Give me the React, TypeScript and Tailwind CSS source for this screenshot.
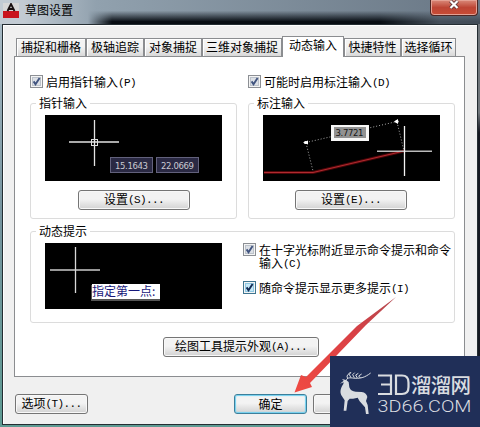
import type { ReactNode } from "react";
import clsx from "clsx";

const TABS = [
    { label: "捕捉和栅格", width: "w-[70px]" },
    { label: "极轴追踪", width: "w-[58px]" },
    { label: "对象捕捉", width: "w-[58px]" },
    { label: "三维对象捕捉", width: "w-[80px]" },
    { label: "动态输入", width: "w-[62px]", active: true },
    { label: "快捷特性", width: "w-[57px]" },
    { label: "选择循环", width: "w-[55px]" },
];

// Latin letters take half the width of a Chinese character
function Key({ children }: { children: ReactNode }) {
    return <span className="relative -top-px font-['Liberation_Mono',monospace] text-[11px] tracking-[-0.6px]">{children}</span>;
}

function Button({ className, primary, children }: { className: string; primary?: boolean; children?: ReactNode }) {
    return (
        <button
            className={clsx(
                "flex h-5 shrink-0 items-center justify-center rounded-[3px] border bg-linear-to-b from-[#f3f3f3] from-45% to-[#d2d2d2] whitespace-pre",
                primary ? "border-[#3c7f9b] shadow-[inset_0_0_1px_1px_#6fd0f0]" : "border-[#757575] shadow-[inset_0_0_0_1px_#f8f8f8]",
                className
            )}
        >
            <span className="leading-3">{children}</span>
        </button>
    );
}

function Checkbox({ hot, children }: { hot?: boolean; children: ReactNode }) {
    return (
        <label className="flex items-start gap-[3px] leading-[13px]">
            <svg className="shrink-0" width="13" height="13" viewBox="0 0 13 13">
                <rect x=".5" y=".5" width="12" height="12" fill="#f4f4f4" stroke={hot ? "#3f7590" : "#8c8f94"} />
                <rect x="2.5" y="2.5" width="8" height="8" fill={hot ? "#c5e8f8" : "#dce0e6"} stroke={hot ? "#8fc8e2" : "#bcc2ca"} />
                <path d="M3.6 6.4 5.5 9.2 9.6 3" fill="none" stroke={hot ? "#122c55" : "#41547f"} strokeWidth="1.9" />
            </svg>
            <span>{children}</span>
        </label>
    );
}

function Group({ title, className, children }: { title: string; className: string; children: ReactNode }) {
    return (
        <fieldset className={clsx("min-w-0 rounded-[3px] border border-[#dcdcdc] px-[14px]", className)}>
            <legend className="-ml-[9px] h-3 px-[3px] leading-3">{title}</legend>
            {children}
        </fieldset>
    );
}

function PointerPreview() {
    return (
        <svg className="mt-[6px] block" width="177" height="66" viewBox="0 0 177 66">
            <rect width="177" height="66" fill="#000" />
            <path d="M24 27h50" stroke="#aaa" strokeWidth="1.8" />
            <path d="M49.500 5v46" stroke="#e4e4e4" strokeWidth="1.3" />
            <rect x="46.500" y="24.500" width="6" height="6" fill="none" stroke="#ddd" />
            <g fill="#2a2943" stroke="#62617c">
                <rect x="65.500" y="42.500" width="42" height="15" />
                <rect x="111.500" y="42.500" width="42" height="15" />
            </g>
            <g fill="#c9c9d2" fontFamily="DejaVu Sans, sans-serif" fontSize="8.500">
                <text x="70" y="53.500" textLength="33">15.1643</text>
                <text x="116" y="53.500" textLength="33">22.0669</text>
            </g>
        </svg>
    );
}

function DimensionPreview() {
    return (
        <svg className="mt-[6px] block" width="177" height="66" viewBox="0 0 177 66">
            <rect width="177" height="66" fill="#000" />
            <path d="M1 57.500h49L141 36" fill="none" stroke="#4d0608" strokeWidth="3" />
            <path d="M1 57.500h49L141 36" fill="none" stroke="#b02a30" strokeWidth="1.1" />
            <path d="M43 27.500 134 6.500M43 28l7 28M134 7l7 29" stroke="#aaa" strokeDasharray="1 2" />
            <path d="m40 27.500 5-2v4zM131 6.500l4-2.500v5z" fill="#fff" />
            <circle cx="42.500" cy="27.500" r="1.600" fill="#fff" />
            <circle cx="134" cy="6.500" r="1.600" fill="#fff" />
            <path d="M114 36.300h55" stroke="#bbb" strokeWidth="1.500" />
            <path d="M141.500 11v50" stroke="#f4f4f4" strokeWidth="1.300" />
            <rect x="68" y="10" width="38" height="16" fill="#f7f7f7" />
            <rect x="71" y="12" width="32" height="11" fill="#929292" />
            <text x="72.500" y="21" textLength="28" fill="#151515" fontFamily="DejaVu Sans, sans-serif" fontSize="8.500">3.7721</text>
        </svg>
    );
}

function PromptPreview() {
    return (
        <svg className="block shrink-0" width="177" height="66" viewBox="0 0 177 66">
            <rect width="177" height="66" fill="#000" />
            <path d="M5 27h50" stroke="#999" strokeWidth="1.800" />
            <path d="M30.500 4v46" stroke="#d8d8d8" strokeWidth="1.300" />
            <rect x="46" y="42" width="69" height="16" fill="#555" />
            <rect x="47" y="41" width="68" height="15" fill="#fff" />
            <text x="47" y="53" fill="#17177a" fontFamily="Noto Sans CJK SC, sans-serif" fontSize="12">指定第一点:</text>
        </svg>
    );
}

function Watermark() {
    return (
        <svg className="absolute top-[356px] left-[330px]" width="150" height="71" viewBox="0 0 150 71">
            <rect width="150" height="71" fill="#202f58" />
            <g transform="translate(0 -1) scale(.33333)">
                <path d="M30 86 41 77l-5-5 12 3 8 6 2 16c3 9 10 12 19 13l18 1c10 1 16 7 17 15l-4 12 5 12 3 27h-8l-3-20-16-18-6-11c-10 3-18 3-24 3l-6 7-4 29h-8l3-31-8-12c-7-11-6-22 4-37l1-5z" fill="#d9dce0" />
                <path d="M49 77c1-9 9-9 18-8 23 3 37-1 55-15M53 72l-2-9 9-11M63 68l-5-9 5-8M73 68l-5-9 6-6M82 69l-5-9 8-5M91 69l-5-6 9-6" fill="none" stroke="#d9dce0" strokeWidth="3" />
            </g>
            <g fill="none" stroke="#d9dce0" strokeWidth="2.200">
                <path d="M48 19.500h13v18.500H48M51 28.500h10" />
                <path d="M66 19.500h6q6.500 0 6.500 7v4.500q0 7-6.500 7h-6z" />
            </g>
            <text x="81" y="37" textLength="60" fill="#d9dce0" fontFamily="Noto Sans CJK SC, sans-serif" fontWeight="500" fontSize="20.500">溜溜网</text>
            <text x="47.500" y="55.500" textLength="94" lengthAdjust="spacingAndGlyphs" fill="#d9dce0" fontFamily="Roboto, sans-serif" fontWeight="300" fontSize="17">3D66.COM</text>
        </svg>
    );
}

export default function App() {
    return (
        <div className="relative flex h-[427px] w-[480px] flex-col overflow-hidden bg-linear-to-b from-[#aebfca] via-[#76949f] to-[#5e9b93] font-['Noto_Sans_CJK_SC',sans-serif] text-xs leading-3 text-black">
            <header className="flex h-6 shrink-0 justify-between bg-linear-to-r from-[#c2cbd3] from-5% via-[#91a1ae] via-20% to-[#697785]">
                <div className="absolute inset-x-0 top-0 h-6 bg-[linear-gradient(to_bottom,transparent_45%,#080d13_90%)] mask-[linear-gradient(to_right,#0000_88px,#000_112px,#000_380px,#0006_440px)]" />
                <div className="relative flex items-start gap-[6px] pt-[3px] pl-[3px]">
                    <svg width="16" height="15" viewBox="0 0 16 15">
                        <rect width="16" height="15" fill="#d7d7d7" />
                        <path d="M0 8h16v7H0z" fill="#c9141d" />
                        <path d="M4.500 8 8 1l3.500 7M5.500 6h5" fill="none" stroke="#180f10" strokeWidth="1.800" />
                    </svg>
                    <h1 className="leading-[13px]">草图设置</h1>
                </div>
                <button className="relative mr-0.5 flex h-4 w-12 justify-center rounded-b-[4px] border border-t-0 border-[#4d2623] bg-linear-to-b from-[#d9897a] via-[#bd4535] to-[#c84c35] shadow-[inset_0_0_0_1px_#e4a194]">
                    <svg width="10" height="10" viewBox="0 0 10 10">
                        <path d="m1.500 1 7 7m0-7-7 7" stroke="#593237" strokeWidth="3.800" />
                        <path d="m1.500 1 7 7m0-7-7 7" stroke="#fff" strokeWidth="2.200" />
                    </svg>
                </button>
            </header>

            <div className="flex min-h-0 flex-1">
                <div className="w-0.5 shrink-0" />
                <main className="flex h-[401px] w-[476px] flex-col border border-[#242d32] bg-[#f0f0f0] shadow-[inset_1px_1px_0_#fff]">
                    <nav className="flex h-[31px] shrink-0 items-end pl-[13px]">
                        {TABS.map((tab) => (
                            <div
                                key={tab.label}
                                className={clsx(
                                    "flex shrink-0 justify-center border border-b-0 border-[#8b8d90] pt-0.5 whitespace-nowrap",
                                    tab.width,
                                    tab.active
                                        ? "relative z-10 -mb-px h-[21px] bg-white"
                                        : "h-[18px] bg-linear-to-b from-[#f3f3f3] from-45% to-[#d8d8d8] shadow-[inset_1px_1px_0_#fff]"
                                )}
                            >
                                {tab.label}
                            </div>
                        ))}
                    </nav>

                    <section className="ml-[11px] flex h-[321px] w-[451px] shrink-0 flex-col border border-[#8b8d90] bg-white pt-[18px] pl-[15px]">
                        <div className="flex h-[13px]">
                            <div className="w-[218px]">
                                <Checkbox>启用指针输入<Key>(P)</Key></Checkbox>
                            </div>
                            <Checkbox>可能时启用标注输入<Key>(D)</Key></Checkbox>
                        </div>

                        <div className="mt-[9px] flex gap-[11px]">
                            <Group title="指针输入" className="h-[122px] w-[207px]">
                                <PointerPreview />
                                <Button className="mt-[9px] ml-[33px] w-[112px]">设置<Key>(S)...</Key></Button>
                            </Group>
                            <Group title="标注输入" className="h-[122px] w-[207px]">
                                <DimensionPreview />
                                <Button className="mt-[9px] ml-8 w-[112px]">设置<Key>(E)...</Key></Button>
                            </Group>
                        </div>

                        <Group title="动态提示" className="mt-[6px] h-[98px] w-[425px]">
                            <div className="flex pt-[6px]">
                                <PromptPreview />
                                <div className="ml-[21px] w-[208px] whitespace-nowrap">
                                    <div className="h-[38px]">
                                        <Checkbox>在十字光标附近显示命令提示和命令<br />输入<Key>(C)</Key></Checkbox>
                                    </div>
                                    <Checkbox hot>随命令提示显示更多提示<Key>(I)</Key></Checkbox>
                                </div>
                            </div>
                        </Group>

                        <Button className="mt-[14px] ml-[133px] w-[156px]">绘图工具提示外观<Key>(A)...</Key></Button>
                    </section>

                    <footer className="mt-[17px] flex pl-3">
                        <Button className="w-[73px]">选项<Key>(T)...</Key></Button>
                        <Button primary className="ml-[146px] w-[73px]">确定</Button>
                        <Button className="ml-[6px] w-[73px]" />
                    </footer>
                </main>
                <div className="flex-1 bg-linear-to-b from-[#70767b] from-22% to-[#151821] to-27%" />
            </div>

            <svg className="absolute top-[290px] left-[288px]" width="114" height="108" viewBox="288 290 114 108">
                <defs>
                    <linearGradient id="arrow" x1="1" y1="0" x2="0" y2="1">
                        <stop offset="0" stopColor="#b04a50" />
                        <stop offset=".4" stopColor="#d94045" />
                        <stop offset="1" stopColor="#f04a42" />
                    </linearGradient>
                </defs>
                <path d="M396 297 357 326 306 377l-5-2-6.500 17.500L312 387l-2-4 56-58z" fill="url(#arrow)" />
            </svg>

            <Watermark />
        </div>
    );
}
